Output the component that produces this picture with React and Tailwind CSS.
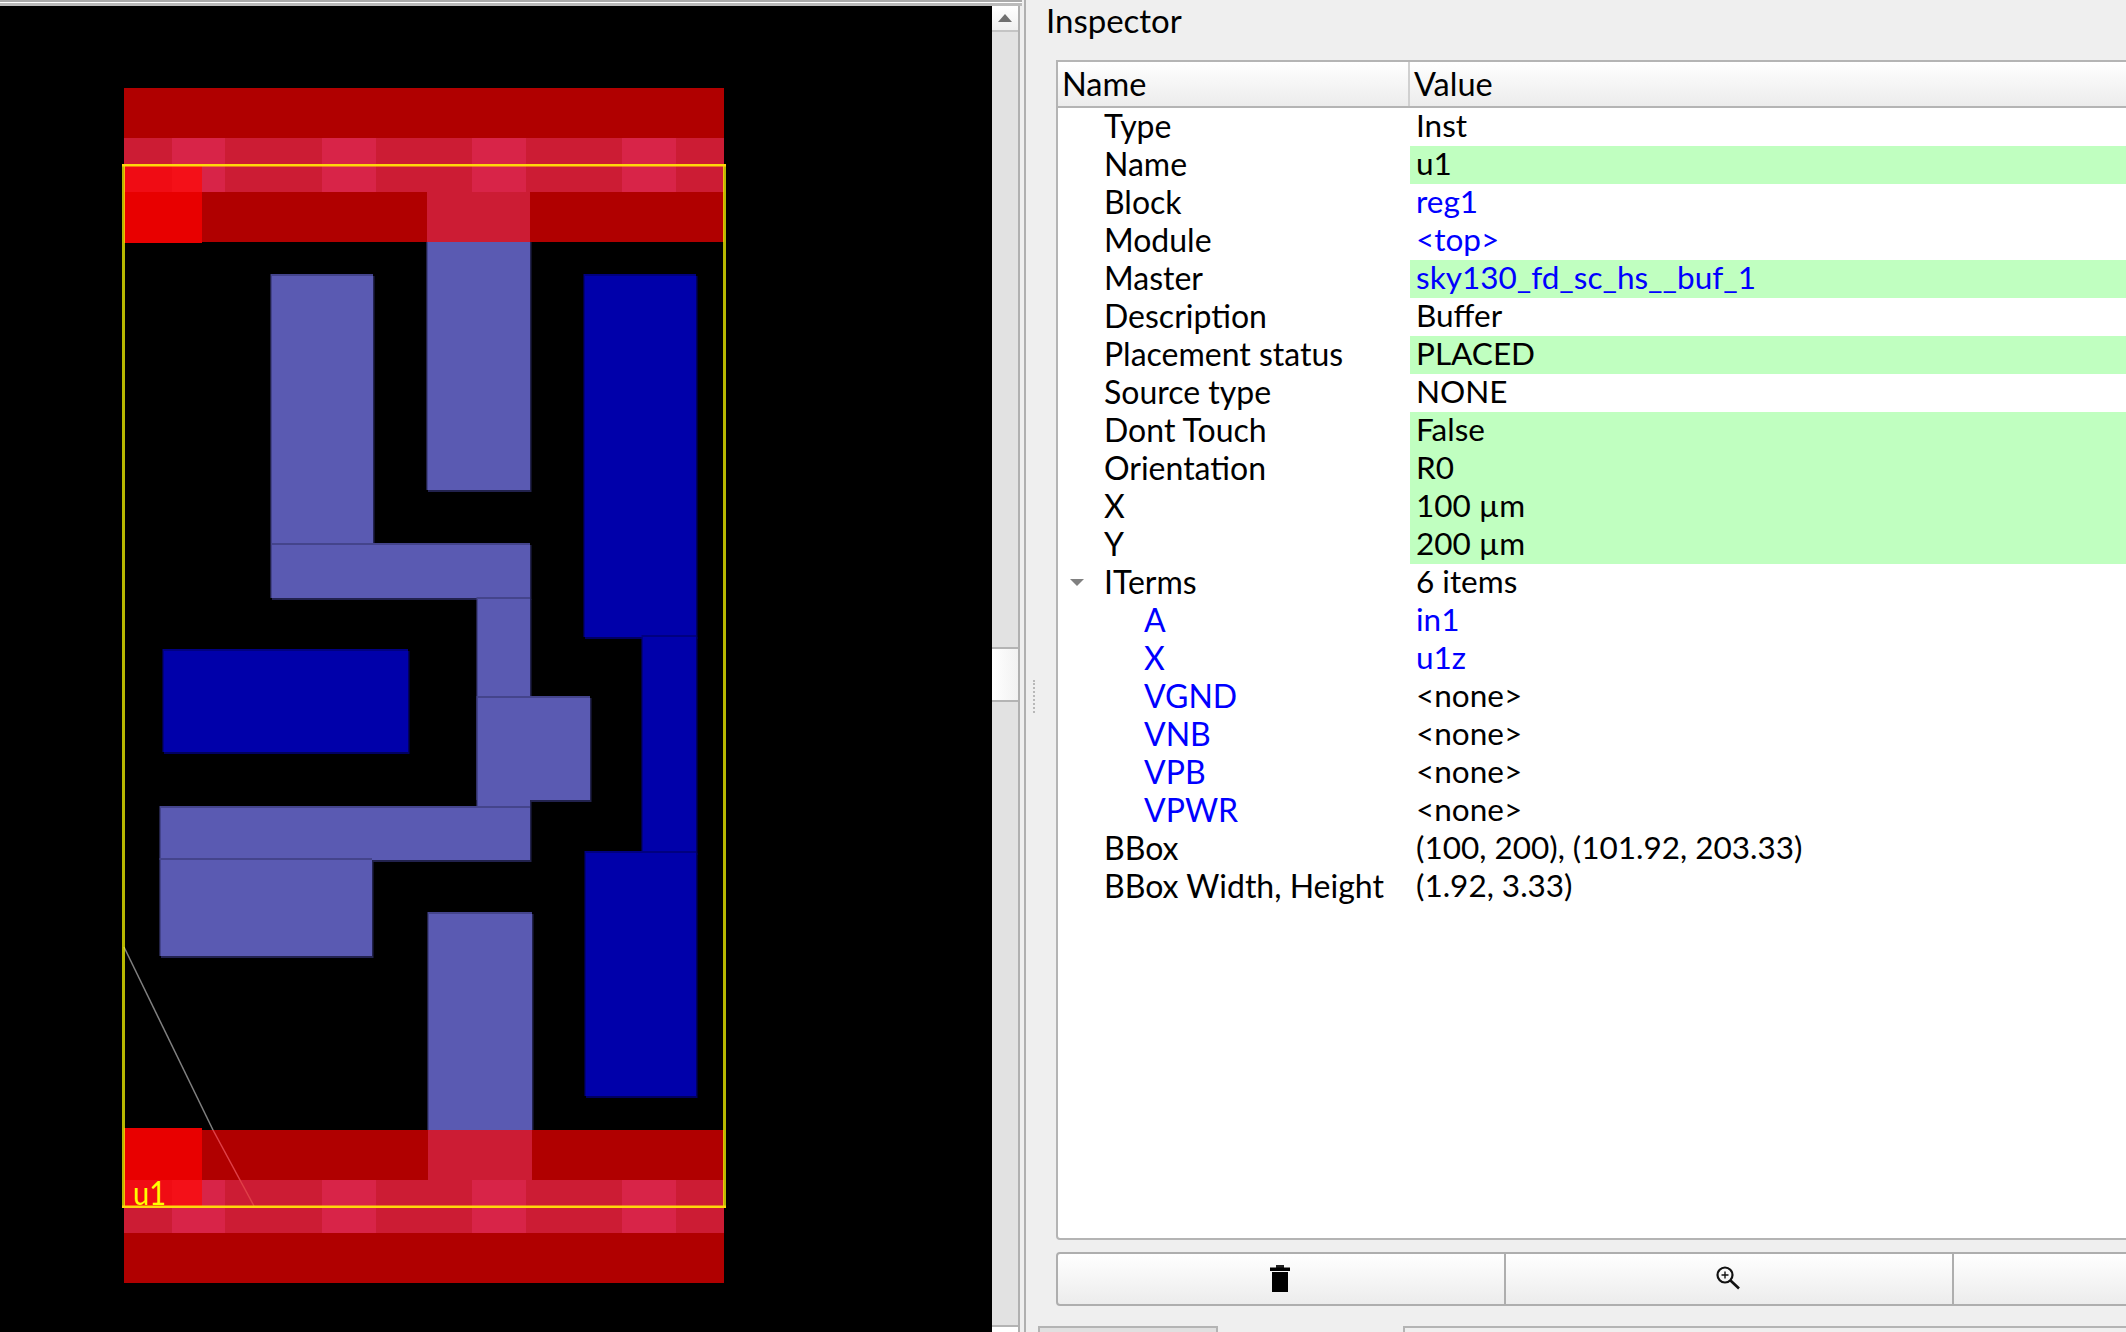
import React from "react";

const PURPLE = "#5a5ab2";
const BLUE = "#0000aa";

// layout shapes, [x, y, w, h] in page pixels
const purpleRects = [
  [272, 276, 101, 267],
  [428, 242, 102, 248],
  [272, 545, 258, 53],
  [478, 599, 52, 207],
  [478, 698, 112, 102],
  [161, 808, 369, 52],
  [161, 860, 211, 96],
  [429, 914, 103, 216],
];
const blueRects = [
  [585, 276, 111, 361],
  [643, 637, 53, 216],
  [586, 853, 110, 243],
  [164, 651, 244, 101],
];

const stripes = [
  [124, 48, "#cc1c34"],
  [172, 53, "#d82448"],
  [225, 97, "#cc1c34"],
  [322, 54, "#d82448"],
  [376, 96, "#cc1c34"],
  [472, 54, "#d82448"],
  [526, 96, "#cc1c34"],
  [622, 54, "#d82448"],
  [676, 48, "#cc1c34"],
];

function Shapes({ rects, fill, lt, rb }) {
  return (
    <g>
      {rects.map(([x, y, w, h]) => (
        <rect key={`${x}-${y}`} x={x} y={y} width={w + 1.5} height={h + 2} fill={rb} />
      ))}
      {rects.map(([x, y, w, h]) => (
        <g key={`${x}-${y}`}>
          <rect x={x - 1.5} y={y - 2} width={w + 1.5} height={h + 2} fill={lt} />
          <rect x={x} y={y} width={w} height={h} fill={fill} />
        </g>
      ))}
    </g>
  );
}

function PowerRail({ barY, stripeY, railY, blockY, blockH, brightY, via }) {
  return (
    <g>
      <rect x={124} y={barY} width={600} height={50} fill="#b00000" />
      {stripes.map(([x, w, c]) => (
        <rect key={x} x={x} y={stripeY} width={w} height={54} fill={c} />
      ))}
      <rect x={124} y={railY} width={600} height={50} fill="#b00000" />
      <rect x={via[0]} y={railY} width={via[1]} height={50} fill="#cc1c34" />
      <rect x={124} y={blockY} width={78} height={blockH} fill="#e80000" />
      <rect x={124} y={brightY} width={48} height={26} fill="#f00c14" />
      <rect x={172} y={brightY} width={30} height={26} fill="#f41018" />
    </g>
  );
}

function Layout() {
  return (
    <svg width="992" height="1326" viewBox="0 6 992 1326" className="block">
      <rect x="0" y="6" width="992" height="1326" fill="#000" />
      <Shapes rects={purpleRects} fill={PURPLE} lt="#44448c" rb="#22224e" />
      <Shapes rects={blueRects} fill={BLUE} lt="#000080" rb="#000060" />
      <PowerRail barY={88} stripeY={138} railY={192} blockY={192} blockH={51} brightY={166} via={[427, 103]} />
      <PowerRail barY={1233} stripeY={1179} railY={1130} blockY={1128} blockH={52} brightY={1180} via={[428, 104]} />

      {/* selection line */}
      <line x1="124" y1="947" x2="213" y2="1130" stroke="#808080" strokeWidth="1.5" />
      <line x1="213" y1="1130" x2="254" y2="1206" stroke="#e04048" strokeWidth="1.5" />

      {/* instance box */}
      <rect x="122" y="166" width="3" height="1040" fill="#ffff00" fillOpacity="0.72" />
      <rect x="723" y="166" width="3" height="1040" fill="#ffff00" fillOpacity="0.72" />
      <rect x="122" y="164" width="604" height="2.5" fill="#ffd80a" />
      <rect x="122" y="1205.5" width="604" height="2.5" fill="#ffd80a" />
      <text
        x="133"
        y="1205"
        fill="#ffff00"
        fontSize="33"
        fontFamily="Lato, sans-serif"
        textLength="33"
        lengthAdjust="spacingAndGlyphs"
      >
        u1
      </text>
    </svg>
  );
}

function Scrollbar() {
  return (
    <div className="w-[28px] h-full flex flex-col bg-[#e2e2e2] border-r-2 border-[#b0b0b0]">
      <div className="h-[26px] bg-gradient-to-b from-white to-[#f0f0f0] border-b-2 border-[#c4c4c4] flex items-center justify-center">
        <div className="w-0 h-0 border-l-[7px] border-r-[7px] border-b-[8px] border-l-transparent border-r-transparent border-b-[#707070]" />
      </div>
      <div className="h-[615px]" />
      <div className="h-[55px] bg-gradient-to-r from-white to-[#f2f2f2] border-y-2 border-[#b4b4b4]" />
      <div className="h-[623px]" />
      <div className="flex-1 bg-white border-t-2 border-[#b4b4b4]" />
    </div>
  );
}

const rows = [
  { name: "Type", value: "Inst" },
  { name: "Name", value: "u1", edit: true },
  { name: "Block", value: "reg1", link: true },
  { name: "Module", value: "<top>", link: true },
  { name: "Master", value: "sky130_fd_sc_hs__buf_1", link: true, edit: true },
  { name: "Description", value: "Buffer" },
  { name: "Placement status", value: "PLACED", edit: true },
  { name: "Source type", value: "NONE" },
  { name: "Dont Touch", value: "False", edit: true },
  { name: "Orientation", value: "R0", edit: true },
  { name: "X", value: "100 µm", edit: true },
  { name: "Y", value: "200 µm", edit: true },
  { name: "ITerms", value: "6 items", open: true },
  { name: "A", value: "in1", child: true, link: true },
  { name: "X", value: "u1z", child: true, link: true },
  { name: "VGND", value: "<none>", child: true },
  { name: "VNB", value: "<none>", child: true },
  { name: "VPB", value: "<none>", child: true },
  { name: "VPWR", value: "<none>", child: true },
  { name: "BBox", value: "(100, 200), (101.92, 203.33)" },
  { name: "BBox Width, Height", value: "(1.92, 3.33)" },
];

function Row({ row }) {
  return (
    <div className="flex h-[38px] leading-[35px]">
      <div className={`relative w-[352px] shrink-0 whitespace-nowrap text-[32px] ${row.child ? "pl-[86px] text-[#0000ff]" : "pl-[46px]"}`}>
        {row.open && (
          <div className="absolute left-[12px] top-[15px] w-0 h-0 border-l-[7px] border-r-[7px] border-t-[7px] border-l-transparent border-r-transparent border-t-[#808080]" />
        )}
        {row.name}
      </div>
      <div className={`flex-1 pl-[6px] whitespace-nowrap text-[31.5px] ${row.edit ? "bg-[#c0ffc0]" : ""} ${row.link ? "text-[#0000ff]" : ""}`}>
        {row.value}
      </div>
    </div>
  );
}

function TrashIcon() {
  return (
    <svg width="20" height="28" viewBox="0 0 20 28">
      <rect x="6" y="0" width="8" height="3" fill="#222" />
      <rect x="0" y="2.5" width="20" height="3.5" fill="#000" />
      <rect x="2" y="7" width="16" height="20" fill="#000" />
    </svg>
  );
}

function ZoomIcon() {
  return (
    <svg width="26" height="26" viewBox="0 0 26 26" fill="none" stroke="#111">
      <circle cx="10" cy="10" r="7.5" strokeWidth="2.2" />
      <path d="M15.5 15.5 L24 23.5" strokeWidth="2.6" />
      <path d="M10 6.5 V13.5 M6.5 10 H13.5" strokeWidth="1.4" />
    </svg>
  );
}

export default function App() {
  return (
    <div
      className="w-[2126px] h-[1332px] overflow-hidden flex bg-[#efefef] text-black"
      style={{ fontFamily: "Lato, sans-serif" }}
    >
      <div className="w-[1022px] shrink-0 h-full flex flex-col border-t-2 border-[#aaaaaa]">
        <div className="h-[1px] bg-white" />
        <div className="h-[3px] bg-[#bbbbbb]" />
        <div className="flex flex-1 min-h-0 overflow-hidden">
          <Layout />
          <Scrollbar />
        </div>
      </div>

      <div className="w-[2px] shrink-0" />
      <div className="w-[2px] shrink-0 h-full bg-[#b0b0b0]" />

      <div className="relative flex-1 min-w-0 h-full flex flex-col pl-[30px]">
        {/* splitter grip */}
        <div className="absolute left-[7px] top-[680px] h-[33px] border-l-2 border-dotted border-[#b8b8b8]" />
        <div className="absolute left-[20px] top-0 leading-[40px] text-[33px]">Inspector</div>

        <div className="mt-[60px] w-[1200px] h-[1180px] shrink-0 bg-white border-2 border-[#b4b4b4] rounded-bl-[4px]">
          <div className="flex h-[44px] leading-[43px] text-[32.5px] bg-gradient-to-b from-white to-[#ececec]">
            <div className="w-[352px] shrink-0 pl-[4px] border-r-2 border-[#d0d0d0]">Name</div>
            <div className="flex-1 pl-[4px]">Value</div>
          </div>
          <div className="h-[2px] bg-[#b4b4b4]" />
          {rows.map((row, i) => (
            <Row key={i} row={row} />
          ))}
        </div>

        <div className="mt-[12px] flex h-[54px] shrink-0 w-[1300px]">
          <button className="w-[450px] shrink-0 flex items-center justify-center pr-[3px] bg-gradient-to-b from-white to-[#ececec] border-2 border-[#aeaeae] rounded-l-[4px]">
            <TrashIcon />
          </button>
          <button className="w-[450px] shrink-0 -ml-[2px] flex items-center justify-center pr-[2px] pb-[2px] bg-gradient-to-b from-white to-[#ececec] border-2 border-[#aeaeae]">
            <ZoomIcon />
          </button>
          <button className="flex-1 -ml-[2px] bg-gradient-to-b from-white to-[#ececec] border-2 border-[#aeaeae]" />
        </div>

        <div className="mt-[20px] flex -ml-[18px] w-[1300px]">
          <div className="w-[180px] shrink-0 h-[20px] bg-[#e0e0e0] border-2 border-[#b4b4b4]" />
          <div className="ml-[185px] w-[1000px] shrink-0 h-[20px] bg-[#efefef] border-2 border-[#b4b4b4]" />
        </div>
      </div>
    </div>
  );
}
